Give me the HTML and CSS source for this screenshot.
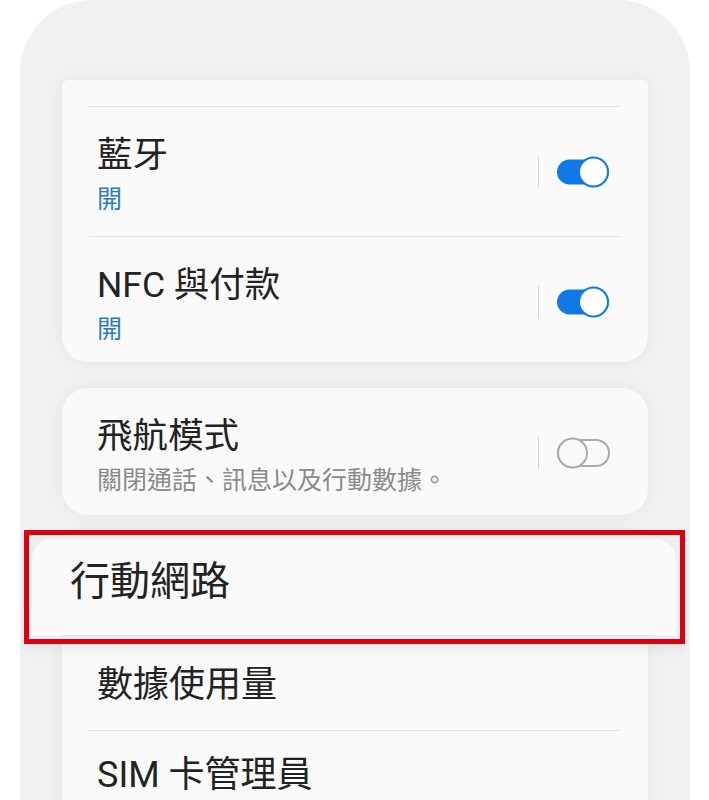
FILE: index.html
```html
<!DOCTYPE html>
<html lang="zh-Hant">

<head>
  <meta charset="UTF-8">
  <meta name="viewport" content="width=device-width, initial-scale=1.0">
  <title>連接</title>
  <link rel="stylesheet" href="styles.css">
</head>

<body>
  <div class="screen">
    <section class="card card-top">
      <div class="row">
        <div class="text">
          <div class="title">藍牙</div>
          <div class="sub sub-on">開</div>
        </div>
        <div class="control">
          <span class="divider"></span>
          <svg class="switch" width="56" height="34" viewBox="0 0 56 34">
            <rect x="2" y="4.5" width="52" height="25" rx="12.5" fill="#1179e6" />
            <circle cx="38.5" cy="17" r="14.5" fill="#fff" stroke="#1179e6" stroke-width="2" />
          </svg>
        </div>
      </div>
      <div class="row">
        <div class="text">
          <div class="title">NFC 與付款</div>
          <div class="sub sub-on">開</div>
        </div>
        <div class="control">
          <span class="divider"></span>
          <svg class="switch" width="56" height="34" viewBox="0 0 56 34">
            <rect x="2" y="4.5" width="52" height="25" rx="12.5" fill="#1179e6" />
            <circle cx="38.5" cy="17" r="14.5" fill="#fff" stroke="#1179e6" stroke-width="2" />
          </svg>
        </div>
      </div>
    </section>

    <section class="card">
      <div class="row row-plain">
        <div class="text">
          <div class="title">飛航模式</div>
          <div class="sub">關閉通話、訊息以及行動數據。</div>
        </div>
        <div class="control">
          <span class="divider"></span>
          <svg class="switch" width="56" height="34" viewBox="0 0 56 34">
            <rect x="3" y="4" width="51" height="26" rx="13" fill="none" stroke="#a9a9a9" stroke-width="2" />
            <circle cx="17.5" cy="17" r="14.5" fill="#fafafa" stroke="#a9a9a9" stroke-width="2" />
          </svg>
        </div>
      </div>
    </section>

    <section class="card card-list">
      <div class="focus">
        <div class="focus-card">
          <div class="focus-title">行動網路</div>
          <div class="focus-line"></div>
        </div>
      </div>
      <div class="item">數據使用量</div>
      <div class="item">SIM 卡管理員</div>
    </section>
  </div>
</body>

</html>
```

FILE: styles.css
```css
* {
  box-sizing: border-box;
}

html,
body {
  height: 100%;
}

body {
  margin: 0;
  background: #fff;
  font-family: Roboto, "Noto Sans CJK TC", sans-serif;
  color: #222;
  overflow: hidden;
}

.screen {
  margin: 0 19px 0 20px;
  height: 800px;
  padding: 80px 42px 0;
  background: #f1f1f3;
  border-radius: 72px 72px 0 0;
}

.card {
  background: #fafafa;
  border-radius: 26px;
  box-shadow: 0 0 16px rgba(0, 0, 0, .05);
  margin-bottom: 26px;
}

.card-top {
  border-radius: 6px 6px 26px 26px;
  padding-top: 26px;
}

.row {
  display: flex;
  align-items: center;
  margin: 0 28px 0 27px;
  padding: 27px 9px 21px 8px;
  border-top: 1px solid #e3e3e5;
}

.card-top .row:last-child {
  padding-bottom: 17px;
}

.row-plain {
  border-top: 0;
  padding-top: 27px;
  padding-bottom: 19px;
}

.text {
  flex: 1;
}

.title {
  font-size: 35.5px;
  line-height: 42px;
}

.sub {
  margin-top: 8px;
  font-size: 25px;
  line-height: 31px;
  color: #8a8a8a;
}

.sub-on {
  color: #2a7dbd;
}

.control {
  display: flex;
  align-items: center;
  margin-top: -6px;
}

.divider {
  width: 1px;
  height: 32px;
  background: #d6d6d8;
  margin-right: 16px;
}

.switch {
  display: block;
}

.card-list {
  margin-top: -11px;
  margin-bottom: 0;
  border-radius: 26px 26px 0 0;
  height: 300px;
}

.focus {
  margin: 0 -37px 0 -38px;
  border: 5px solid #d9000f;
  background: #eeeef0;
  padding: 4px 4px 3px 3px;
  box-shadow: 0 6px 10px rgba(0, 0, 0, .06);
}

.focus-card {
  background: #fafafa;
  border-radius: 20px 20px 0 0;
}

.focus-title {
  padding: 19px 0 29px 38px;
  font-size: 40px;
  line-height: 48px;
}

.focus-line {
  height: 1px;
  margin: 0 21px 0 30px;
  background: #e2e2e4;
}

.item {
  margin: 0 28px 0 27px;
  padding: 20px 8px 24px;
  font-size: 36px;
  line-height: 42px;
  border-bottom: 1px solid #e3e3e5;
}

.item:last-child {
  border-bottom: 0;
  padding-top: 23px;
}
```
